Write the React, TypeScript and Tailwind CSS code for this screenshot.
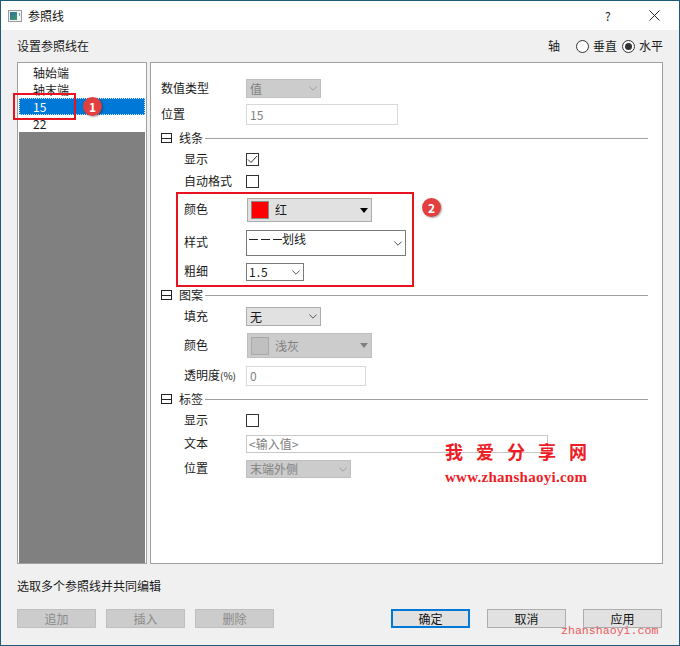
import React from "react";

const cjk = { fontFamily: '"Noto Sans CJK SC", "Noto Sans", sans-serif' };

function Chevron({ color = "#555" }: { color?: string }) {
  return (
    <svg width="8" height="5" viewBox="0 0 8 5" fill="none" className="shrink-0">
      <path d="M0.3 0.5L4 4.2L7.7 0.5" stroke={color} strokeWidth="1" />
    </svg>
  );
}

function Caret({ color = "#000" }: { color?: string }) {
  return (
    <svg width="8" height="5" viewBox="0 0 8 5" className="shrink-0">
      <path d="M0 0H8L4 5Z" fill={color} />
    </svg>
  );
}

function Row({
  label,
  className,
  labelClass = "w-[62px]",
  children,
}: {
  label: React.ReactNode;
  className: string;
  labelClass?: string;
  children: React.ReactNode;
}) {
  return (
    <div className={`flex items-center ${className}`}>
      <span className={`shrink-0 whitespace-nowrap text-[12px] leading-none text-[#1a1a1a] ${labelClass}`}>{label}</span>
      {children}
    </div>
  );
}

function Group({ label, className }: { label: string; className: string }) {
  return (
    <div className={`flex h-[14px] items-center ${className}`}>
      <span className="flex h-[10px] w-[11px] shrink-0 items-center border border-[#222]">
        <span className="h-px w-full bg-[#222]" />
      </span>
      <span className="ml-[7px] text-[12px] leading-none text-[#1a1a1a]">{label}</span>
      <span className="ml-[2px] h-px flex-1 bg-[#a0a0a0]" />
    </div>
  );
}

function Check({ checked }: { checked?: boolean }) {
  return (
    <span className="flex h-[13px] w-[13px] items-center justify-center border border-[#333] bg-white">
      {checked && (
        <svg width="11" height="9" viewBox="0 0 11 9" fill="none">
          <path d="M1 4.5L4 7.5L10 1" stroke="#333" strokeWidth="1" />
        </svg>
      )}
    </span>
  );
}

function Radio({ label, on }: { label: string; on?: boolean }) {
  return (
    <span className="flex items-center gap-[4px]">
      <span className="flex h-[13px] w-[13px] items-center justify-center rounded-full border border-[#333] bg-white">
        {on && <span className="h-[7px] w-[7px] rounded-full bg-[#333]" />}
      </span>
      <span className="text-[12px] leading-none text-[#1a1a1a]">{label}</span>
    </span>
  );
}

function Btn({ label, disabled, primary }: { label: string; disabled?: boolean; primary?: boolean }) {
  const tone = disabled
    ? "border-[#bfbfbf] bg-[#cccccc] text-[#8a8a8a]"
    : primary
      ? "border-2 border-[#0078d7] bg-[#e1e1e1] text-[#111]"
      : "border-[#adadad] bg-[#e1e1e1] text-[#111]";
  return (
    <button className={`flex h-[19px] w-[79px] items-center justify-center border text-[12px] leading-none ${tone}`}>
      {label}
    </button>
  );
}

export default function App() {
  return (
    <div style={cjk} className="relative flex h-[646px] w-[680px] flex-col overflow-hidden border border-[#1f5a78] bg-[#f0f0f0]">
      <header className="flex h-[29px] shrink-0 items-center bg-white pl-[7px]">
        <svg width="14" height="12" viewBox="0 0 14 12" className="shrink-0">
          <defs>
            <linearGradient id="ic" x1="0" y1="0" x2="1" y2="1">
              <stop offset="0" stopColor="#2f6f9f" />
              <stop offset="1" stopColor="#3f9a6a" />
            </linearGradient>
          </defs>
          <rect x="0.5" y="0.5" width="13" height="11" fill="#f4f4f4" stroke="#9a9a9a" />
          <rect x="2" y="2" width="7" height="8" fill="url(#ic)" />
          <rect x="11" y="3" width="1" height="3" fill="#7a9ab0" />
        </svg>
        <span className="ml-[6px] text-[12px] leading-none text-[#111]">参照线</span>
        <span className="ml-[541px] text-[12px] leading-none text-[#222]">?</span>
        <svg width="11" height="11" viewBox="0 0 11 11" fill="none" className="ml-[38px]">
          <path d="M0.5 0.5L10.5 10.5M10.5 0.5L0.5 10.5" stroke="#222" strokeWidth="1" />
        </svg>
      </header>

      <div className="flex flex-1 flex-col pl-[16px] pr-[16px]">
        <div className="flex h-[32px] shrink-0 items-center justify-between text-[12px] leading-none text-[#1a1a1a]">
          <span>设置参照线在</span>
          <div className="flex items-center">
            <span className="mr-[16px]">轴</span>
            <Radio label="垂直" />
            <span className="w-[5px]" />
            <Radio label="水平" on />
          </div>
        </div>

        <div className="flex h-[502px] shrink-0 gap-[3px]">
          <div className="flex w-[130px] flex-col border border-[#a0a0a0] bg-white pl-[1px] pr-[1px] pt-[1px] text-[12px] leading-none text-[#1a1a1a]">
            <div className="flex h-[17px] shrink-0 items-center pl-[14px]">轴始端</div>
            <div className="flex h-[17px] shrink-0 items-center pl-[14px]">轴末端</div>
            <div className="flex h-[17px] shrink-0 items-center border border-dotted border-[#cfe6f8] bg-[#0078d7] pl-[13px] text-white">15</div>
            <div className="flex h-[17px] shrink-0 items-center pl-[14px]">22</div>
            <div className="flex-1 bg-[#808080]" />
          </div>

          <div className="flex w-[513px] flex-col border border-[#a0a0a0] bg-white pl-[10px] pr-[14px]">
            <Row label="数值类型" labelClass="w-[85px] pb-[2px]" className="mt-[16px] h-[19px]">
              <div className="flex h-[19px] w-[75px] items-center justify-between border border-[#bfbfbf] bg-[#cccccc] pl-[3px] pr-[3px] text-[12px] text-[#808080]">
                值
                <Chevron color="#a0a0a0" />
              </div>
            </Row>
            <Row label="位置" labelClass="w-[85px] pb-[2px]" className="mt-[6px] h-[21px]">
              <div className="flex h-[21px] w-[152px] items-center border border-[#d9d9d9] pl-[3px] text-[12px] text-[#808080]">15</div>
            </Row>

            <Group label="线条" className="mt-[6px]" />
            <Row label="显示" className="mt-[7px] h-[14px] pl-[23px]">
              <Check checked />
            </Row>
            <Row label="自动格式" className="mt-[8px] h-[14px] pl-[23px]">
              <Check />
            </Row>
            <Row label="颜色" labelClass="w-[63px] pb-[2px]" className="mt-[10px] h-[24px] pl-[23px]">
              <div className="flex h-[24px] w-[125px] items-center border border-[#adadad] bg-[#e1e1e1] pl-[3px] pr-[3px] text-[12px] text-[#1a1a1a]">
                <span className="h-[18px] w-[18px] border border-[#8a8a8a] bg-[#ff0000]" />
                <span className="ml-[6px] flex-1">红</span>
                <Caret />
              </div>
            </Row>
            <Row label="样式" labelClass="w-[62px] pb-[2px]" className="mt-[8px] h-[26px] pl-[23px]">
              <div className="flex h-[26px] w-[160px] items-center justify-between border border-[#7a7a7a] bg-white pl-[2px] pr-[3px]">
                <span className="flex items-center self-start text-[12px] leading-[16px] text-[#1a1a1a]">
                  <svg width="33" height="3" viewBox="0 0 33 3" className="shrink-0">
                    <path d="M0 1.5H9M12 1.5H21M24 1.5H33" stroke="#222" strokeWidth="1.2" />
                  </svg>
                  划线
                </span>
                <Chevron />
              </div>
            </Row>
            <Row label="粗细" labelClass="w-[62px] pb-[2px]" className="mt-[7px] h-[18px] pl-[23px]">
              <div className="flex h-[18px] w-[58px] items-center justify-between border border-[#7a7a7a] bg-white pl-[2px] pr-[3px] text-[12px] tracking-[1px] text-[#1a1a1a]">
                1.5
                <Chevron />
              </div>
            </Row>

            <Group label="图案" className="mt-[7px]" />
            <Row label="填充" labelClass="w-[62px] pb-[2px]" className="mt-[5px] h-[19px] pl-[23px]">
              <div className="flex h-[19px] w-[75px] items-center justify-between border border-[#adadad] bg-[#e1e1e1] pl-[3px] pr-[3px] text-[12px] text-[#1a1a1a]">
                无
                <Chevron />
              </div>
            </Row>
            <Row label="颜色" labelClass="w-[63px] pb-[2px]" className="mt-[7px] h-[25px] pl-[23px]">
              <div className="flex h-[25px] w-[125px] items-center border border-[#bfbfbf] bg-[#cccccc] pl-[3px] pr-[3px] text-[12px] text-[#808080]">
                <span className="h-[18px] w-[18px] border border-[#a8a8a8] bg-[#c0c0c0]" />
                <span className="ml-[6px] flex-1">浅灰</span>
                <Caret color="#808080" />
              </div>
            </Row>
            <Row
              label={
                <>
                  透明度<span className="text-[10px]">(%)</span>
                </>
              }
              labelClass="w-[62px] pb-[2px]"
              className="mt-[8px] h-[20px] pl-[23px]"
            >
              <div className="flex h-[20px] w-[120px] items-center border border-[#d9d9d9] pl-[3px] text-[12px] text-[#808080]">0</div>
            </Row>

            <Group label="标签" className="mt-[6px]" />
            <Row label="显示" className="mt-[7px] h-[14px] pl-[23px]">
              <Check />
            </Row>
            <Row label="文本" labelClass="w-[62px] pb-[2px]" className="mt-[8px] h-[18px] pl-[23px]">
              <div className="flex h-[18px] w-[302px] items-center border border-[#c8c8c8] pl-[2px] text-[12px] text-[#808080]">&lt;输入值&gt;</div>
            </Row>
            <Row label="位置" labelClass="w-[62px] pb-[2px]" className="mt-[7px] h-[18px] pl-[23px]">
              <div className="flex h-[18px] w-[105px] items-center justify-between border border-[#bfbfbf] bg-[#cccccc] pl-[3px] pr-[3px] text-[12px] text-[#808080]">
                末端外侧
                <Chevron color="#a0a0a0" />
              </div>
            </Row>
          </div>
        </div>

        <div className="mt-[15px] h-[14px] shrink-0 text-[12px] leading-[14px] text-[#1a1a1a]">选取多个参照线并共同编辑</div>

        <div className="mt-[16px] flex shrink-0 justify-between pr-[1px]">
          <div className="flex gap-[10px]">
            <Btn label="追加" disabled />
            <Btn label="插入" disabled />
            <Btn label="删除" disabled />
          </div>
          <div className="flex gap-[17px]">
            <Btn label="确定" primary />
            <Btn label="取消" />
            <Btn label="应用" />
          </div>
        </div>
      </div>

      {/* annotations pasted on top of the dialog */}
      <div className="absolute left-[12px] top-[92px] h-[27px] w-[63px] border-2 border-[#e8131f]" />
      <div className="absolute left-[82px] top-[96px] flex h-[19px] w-[19px] items-center justify-center rounded-full bg-[#e2403f] text-[12px] font-bold leading-none text-white shadow-[1px_1px_2px_rgba(0,0,0,0.35)]">1</div>
      <div className="absolute left-[175px] top-[191px] h-[95px] w-[238px] border-2 border-[#e8131f]" />
      <div className="absolute left-[421px] top-[197px] flex h-[19px] w-[19px] items-center justify-center rounded-full bg-[#e2403f] text-[12px] font-bold leading-none text-white shadow-[1px_1px_2px_rgba(0,0,0,0.35)]">2</div>

      <div className="absolute left-[444px] top-[440px] whitespace-nowrap text-[18px] font-bold leading-[20px] tracking-[13px] text-[#ee1c25]">我爱分享网</div>
      <div style={{ fontFamily: '"Liberation Serif", serif' }} className="absolute left-[444px] top-[468px] whitespace-nowrap text-[15px] font-bold leading-[16px] tracking-[0.27px] text-[#ee1c25]">www.zhanshaoyi.com</div>
      <div style={{ fontFamily: '"Liberation Mono", monospace' }} className="absolute left-[560px] top-[623px] whitespace-nowrap text-[11.6px] leading-[14px] text-[#ea5a60]">zhanshaoyi.com</div>
    </div>
  );
}
